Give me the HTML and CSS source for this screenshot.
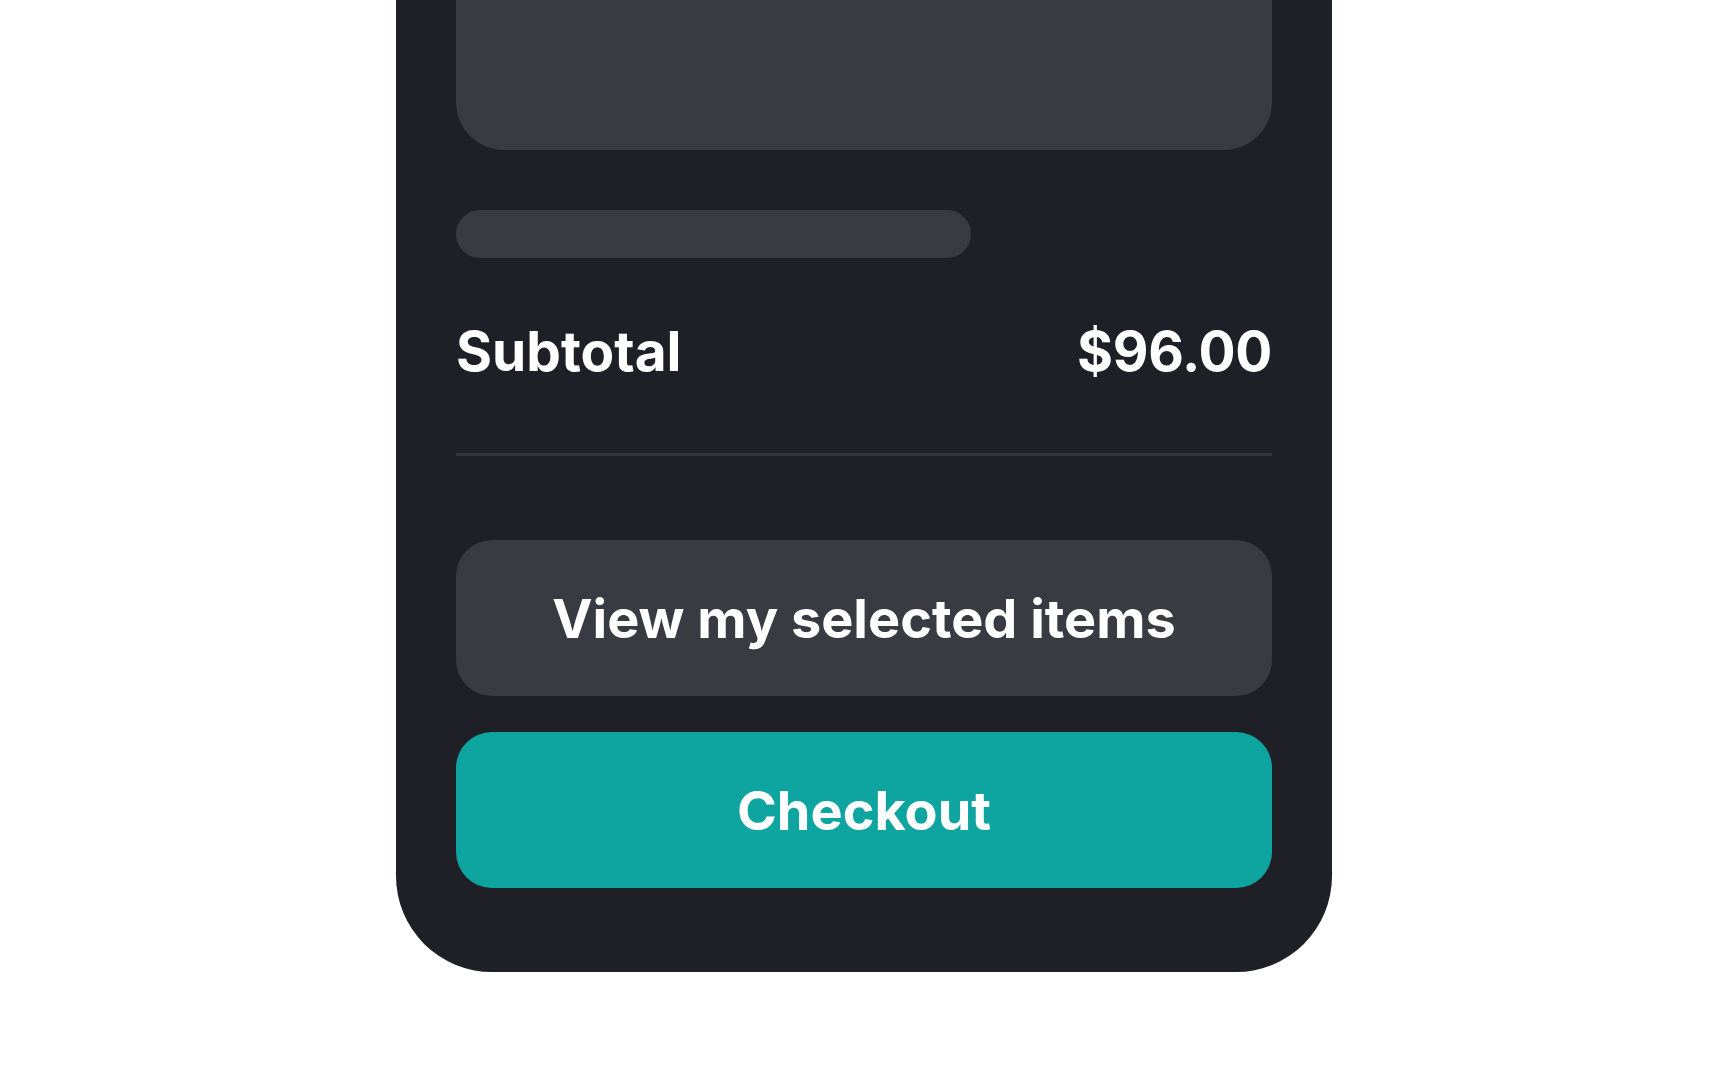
FILE: index.html
```html
<!DOCTYPE html>
<html lang="en">
<head>
<meta charset="utf-8">
<title>Cart</title>
<link rel="stylesheet" href="styles.css">
</head>
<body>
<div class="page">
  <section class="panel">
    <div class="card"></div>
    <div class="skeleton"></div>
    <div class="subtotal">
      <span class="label">Subtotal</span>
      <span class="amount">$96.00</span>
    </div>
    <hr class="divider">
    <div class="actions">
      <button class="btn btn-secondary">View my selected items</button>
      <button class="btn btn-primary">Checkout</button>
    </div>
  </section>
</div>
</body>
</html>
```

FILE: styles.css
```css
html, body {
  margin: 0;
  padding: 0;
  background: #ffffff;
}

body {
  font-family: Inter, "Noto Sans", "Liberation Sans", sans-serif;
  height: 1080px;
  overflow: hidden;
}

.page {
  display: flex;
  justify-content: center;
}

.panel {
  box-sizing: border-box;
  width: 936px;
  margin-top: -300px;
  padding: 60px 60px 84px;
  background: #1f1f27;
  border-radius: 96px;
  display: flex;
  flex-direction: column;
}

.card {
  height: 390px;
  background: #3a3a43;
  border-radius: 48px;
}

.skeleton {
  margin-top: 60px;
  width: 515px;
  height: 48px;
  background: #3a3a43;
  border-radius: 24px;
}

.subtotal {
  margin-top: 60px;
  display: flex;
  justify-content: space-between;
  align-items: baseline;
  color: #ffffff;
  font-size: 55px;
  font-weight: 700;
  line-height: 66px;
}

.amount {
  letter-spacing: -0.3px;
}

.divider {
  margin: 69px 0 0;
  height: 3px;
  border: 0;
  background: #35353e;
}

.actions {
  margin-top: 84px;
  display: flex;
  flex-direction: column;
  gap: 36px;
}

.btn {
  height: 156px;
  border: 0;
  border-radius: 36px;
  display: flex;
  align-items: center;
  justify-content: center;
  font-family: inherit;
  font-size: 54px;
  font-weight: 700;
  color: #ffffff;
  padding: 0;
}

.btn-secondary {
  background: #3a3a43;
}

.btn-primary {
  background: #0ea5a0;
}
```
